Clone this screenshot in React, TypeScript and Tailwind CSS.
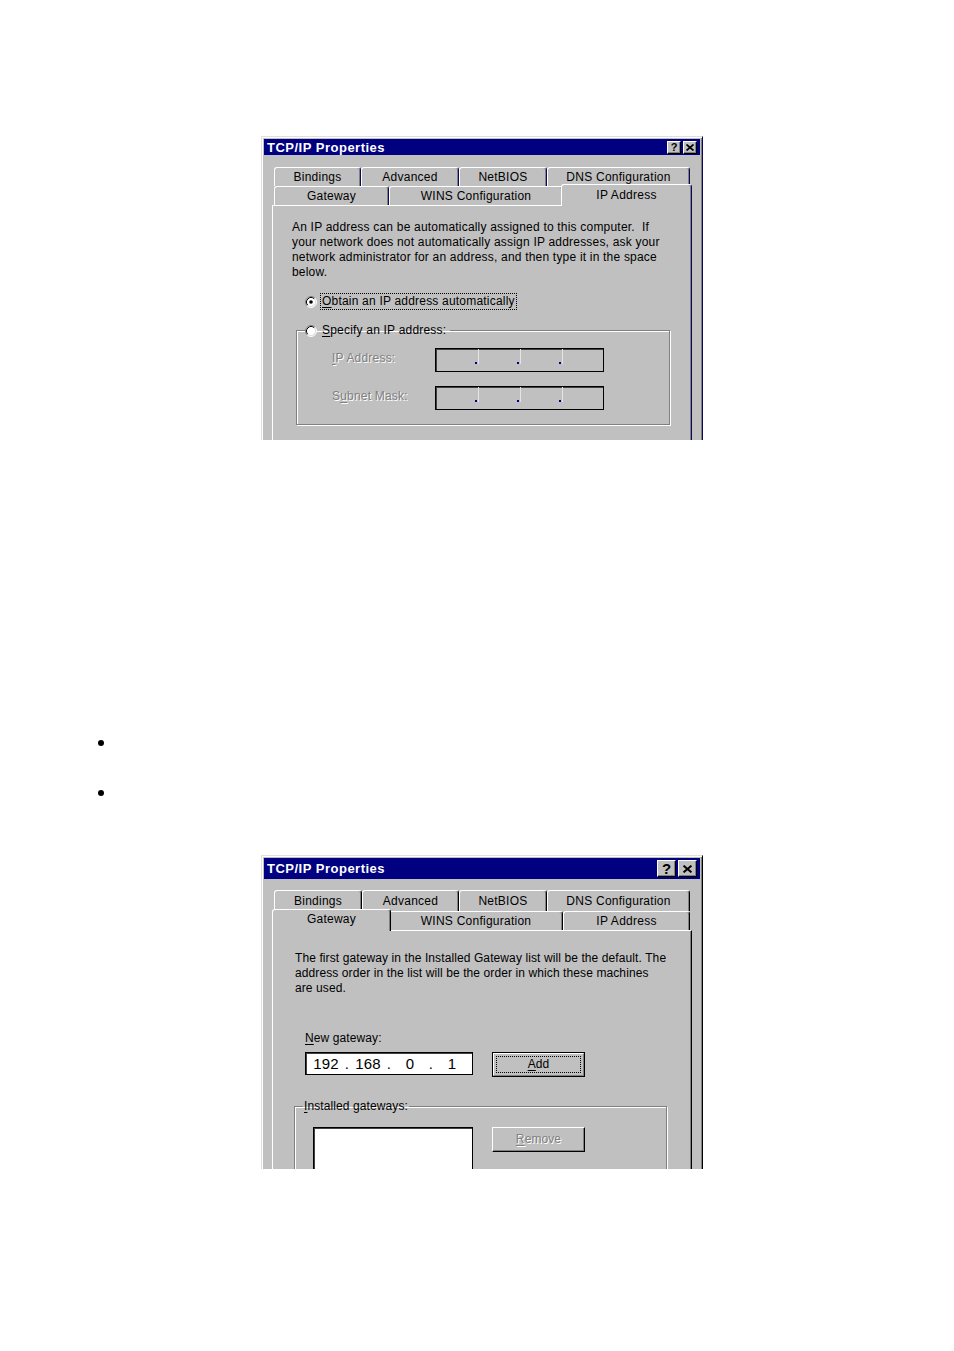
import React from "react";

const FONT = "font-['Liberation_Sans',Arial,sans-serif]";
const GRAY = "bg-[#c0c0c0]";

// small pieces
const U = ({ children }: { children: React.ReactNode }) => <span className="underline underline-offset-[2px]">{children}</span>;

function Radio({ checked }: { checked?: boolean }) {
    return (
        <svg width="12" height="12" viewBox="0 0 12 12" className="shrink-0">
            <circle cx="6" cy="6" r="5" fill="#fff" />
            <path d="M2.11 9.89 A5.5 5.5 0 0 1 9.89 2.11" fill="none" stroke="#808080" />
            <path d="M9.89 2.11 A5.5 5.5 0 0 1 2.11 9.89" fill="none" stroke="#fff" />
            <path d="M2.82 9.18 A4.5 4.5 0 0 1 9.18 2.82" fill="none" stroke="#000" />
            <path d="M9.18 2.82 A4.5 4.5 0 0 1 2.82 9.18" fill="none" stroke="#dfdfdf" />
            {checked && <circle cx="6" cy="6" r="1.8" fill="#000" />}
        </svg>
    );
}

function TitleButton({ big, kind }: { big?: boolean; kind: "help" | "close" }) {
    return (
        <div
            className={`flex shrink-0 items-center justify-center ${GRAY} border-t border-l border-white border-r border-b border-r-black border-b-black shadow-[inset_-1px_-1px_0_#808080] ${
                big ? "w-[19px] h-[17px]" : "w-[14px] h-[13px]"
            }`}
        >
            {kind === "help" ? (
                <span className={`font-bold text-black leading-none ${big ? "text-[15px]" : "text-[11px]"}`}>?</span>
            ) : (
                <svg width={big ? 9 : 8} height={big ? 8 : 7} viewBox="0 0 8 7">
                    <path d="M0.5 0.5 L7.5 6.5 M7.5 0.5 L0.5 6.5" stroke="#000" strokeWidth="1.7" />
                </svg>
            )}
        </div>
    );
}

function TitleBar({ big }: { big?: boolean }) {
    return (
        <div className={`flex shrink-0 items-center justify-between bg-[#000080] ${big ? "h-[21px]" : "h-[16px]"}`}>
            <span className="pl-[3px] text-[13px] font-bold text-white leading-none tracking-[0.5px]">TCP/IP Properties</span>
            <div className="flex gap-[2px] pr-[3px]">
                <TitleButton big={big} kind="help" />
                <TitleButton big={big} kind="close" />
            </div>
        </div>
    );
}

interface TabProps {
    label: string;
    className: string;
    dark: string;
}

const Tab: React.FC<TabProps> = ({ label, className, dark }) => (
    <div
        className={`flex shrink-0 items-center justify-center ${GRAY} rounded-t-[3px] border-l border-t border-white border-r shadow-[inset_-1px_0_0_#808080] text-[12px] tracking-[0.25px] text-black leading-none ${dark} ${className}`}
    >
        {label}
    </div>
);

function IpField({ disabled, values }: { disabled?: boolean; values?: string[] }) {
    const parts = values ?? ["", "", "", ""];
    return (
        <div
            className={`flex shrink-0 items-stretch pl-[3px] border border-black shadow-[inset_1px_1px_0_#404040] ${
                disabled ? "bg-[#c0c0c0]" : "bg-white"
            } ${disabled ? "w-[169px] h-[24px]" : "w-[168px] h-[23px]"}`}
        >
            {parts.map((p, i) => (
                <React.Fragment key={i}>
                    <div className="w-[34px] flex items-center justify-center text-[15px] leading-none text-black">{p}</div>
                    {i < 3 &&
                        (disabled ? (
                            <div className="w-[8px] flex justify-center items-end pb-[7px]">
                                <span className="w-[2px] h-[2px] bg-[#000080]" />
                                <span className="w-[1px] self-stretch bg-[#e4e4e4] ml-[1px]" />
                            </div>
                        ) : (
                            <div className="w-[8px] flex items-center justify-center text-[15px] leading-none text-black">.</div>
                        ))}
                </React.Fragment>
            ))}
        </div>
    );
}

const disabledText = "text-[#808080] [text-shadow:1px_1px_0_#fff]";

function DialogShell({ dark, h, children }: { dark: string; h: string; children: React.ReactNode }) {
    return (
        <div
            className={`ml-[261px] w-[442px] ${h} overflow-hidden flex flex-col ${GRAY} border-t border-l border-[#dfdfdf] border-r ${dark} shadow-[inset_1px_1px_0_#fff,inset_-1px_0_0_#808080] pt-[2px] px-[2px]`}
        >
            {children}
        </div>
    );
}

function IpAddressDialog() {
    const dark = "border-r-[#0a0a5c]";
    return (
        <DialogShell dark={dark} h="h-[304px]">
            <TitleBar />
            <div className="mt-[12px] pl-[10px] shrink-0">
                <div className="flex h-[19px]">
                    <Tab label="Bindings" dark={dark} className="w-[87px]" />
                    <Tab label="Advanced" dark={dark} className="w-[98px]" />
                    <Tab label="NetBIOS" dark={dark} className="w-[88px]" />
                    <Tab label="DNS Configuration" dark={dark} className="w-[143px]" />
                </div>
                <div className="flex h-[19px]">
                    <Tab label="Gateway" dark={dark} className="w-[115px]" />
                    <Tab label="WINS Configuration" dark={dark} className="w-[174px]" />
                    <Tab label="IP Address" dark={dark} className="relative z-10 w-[131px] h-[22px] -mt-[2px] -ml-[2px] pb-[2px] rounded-t-[2px]" />
                </div>
            </div>
            <div className={`ml-[8px] w-[420px] flex-1 min-h-0 border-l border-t border-white border-r ${dark} shadow-[inset_-1px_0_0_#808080] text-[12px] leading-[15px] tracking-[0.2px] text-black`}>
                <p className="pl-[19px] pt-[14px]">
                    An IP address can be automatically assigned to this computer.&nbsp; If
                    <br />
                    your network does not automatically assign IP addresses, ask your
                    <br />
                    network administrator for an address, and then type it in the space
                    <br />
                    below.
                </p>
                <div className="mt-[13px] pl-[32px] flex items-center h-[17px]">
                    <Radio checked />
                    <span className="ml-[3px] h-[17px] flex items-center border border-dotted border-black px-[1px]">
                        <U>O</U>btain an IP address automatically
                    </span>
                </div>
                <fieldset className="mt-[13px] ml-[23px] w-[374px] border border-[#808080] shadow-[inset_1px_1px_0_#fff,1px_1px_0_#fff] pb-[14px]">
                    <legend className="ml-[8px] flex items-center h-[15px] pr-[4px]">
                        <Radio />
                        <span className="ml-[5px]">
                            <U>S</U>pecify an IP address:
                        </span>
                    </legend>
                    <div className="mt-[10px] pl-[35px] flex flex-col gap-[14px]">
                        <div className="flex items-start">
                            <span className={`w-[103px] pt-[3px] ${disabledText}`}>
                                <U>I</U>P Address:
                            </span>
                            <IpField disabled />
                        </div>
                        <div className="flex items-start">
                            <span className={`w-[103px] pt-[3px] ${disabledText}`}>
                                S<U>u</U>bnet Mask:
                            </span>
                            <IpField disabled />
                        </div>
                    </div>
                </fieldset>
            </div>
        </DialogShell>
    );
}

function GatewayDialog() {
    const dark = "border-r-black";
    return (
        <DialogShell dark={dark} h="h-[314px]">
            <TitleBar big />
            <div className="mt-[11px] pl-[10px] shrink-0">
                <div className="flex h-[21px]">
                    <Tab label="Bindings" dark={dark} className="w-[88px]" />
                    <Tab label="Advanced" dark={dark} className="w-[97px]" />
                    <Tab label="NetBIOS" dark={dark} className="w-[88px]" />
                    <Tab label="DNS Configuration" dark={dark} className="w-[143px]" />
                </div>
                <div className="flex h-[19px]">
                    <Tab label="Gateway" dark={dark} className="relative z-10 w-[119px] h-[22px] -mt-[2px] -ml-[2px] -mr-[2px] pb-[3px] rounded-t-[2px]" />
                    <Tab label="WINS Configuration" dark={dark} className="w-[174px]" />
                    <Tab label="IP Address" dark={dark} className="w-[127px]" />
                </div>
            </div>
            <div className={`ml-[8px] w-[420px] flex-1 min-h-0 border-l border-t border-white border-r ${dark} shadow-[inset_-1px_0_0_#808080] text-[12px] leading-[15px] tracking-[0.1px] text-black`}>
                <p className="pl-[22px] pt-[20px]">
                    The first gateway in the Installed Gateway list will be the default. The
                    <br />
                    address order in the list will be the order in which these machines
                    <br />
                    are used.
                </p>
                <div className="mt-[35px] pl-[32px]">
                    <U>N</U>ew gateway:
                </div>
                <div className="mt-[6px] pl-[32px] flex items-start gap-[19px]">
                    <IpField values={["192", "168", "0", "1"]} />
                    <button className="shrink-0 w-[93px] h-[25px] border border-black bg-[#c0c0c0] p-0">
                        <div className="h-full w-full border-t border-l border-white border-r border-b border-r-[#808080] border-b-[#808080] p-[2px]">
                            <div className="h-full w-full border border-dotted border-black flex items-center justify-center text-[12px]">
                                <U>A</U>dd
                            </div>
                        </div>
                    </button>
                </div>
                <fieldset className="mt-[22px] ml-[21px] w-[373px] h-[120px] border border-[#808080] shadow-[inset_1px_1px_0_#fff,1px_1px_0_#fff]">
                    <legend className="ml-[8px] px-[1px] h-[15px] flex items-center">
                        <U>I</U>nstalled gateways:
                    </legend>
                    <div className="mt-[13px] pl-[18px] flex items-start gap-[19px]">
                        <div className="shrink-0 w-[160px] h-[80px] bg-white border border-black shadow-[inset_1px_1px_0_#404040]" />
                        <div className="shrink-0 w-[93px] h-[25px] flex items-center justify-center border-t border-l border-white border-r border-b border-r-black border-b-black shadow-[inset_-1px_-1px_0_#808080]">
                            <span className={disabledText}>
                                <U>R</U>emove
                            </span>
                        </div>
                    </div>
                </fieldset>
            </div>
        </DialogShell>
    );
}

export default function App() {
    return (
        <div className={`w-[954px] min-h-[1351px] bg-white pt-[136px] ${FONT}`}>
            <IpAddressDialog />
            <div className="mt-[300px] ml-[98px] w-[6px] h-[6px] rounded-full bg-black" />
            <div className="mt-[44px] ml-[98px] w-[6px] h-[6px] rounded-full bg-black" />
            <div className="mt-[59px]">
                <GatewayDialog />
            </div>
        </div>
    );
}
